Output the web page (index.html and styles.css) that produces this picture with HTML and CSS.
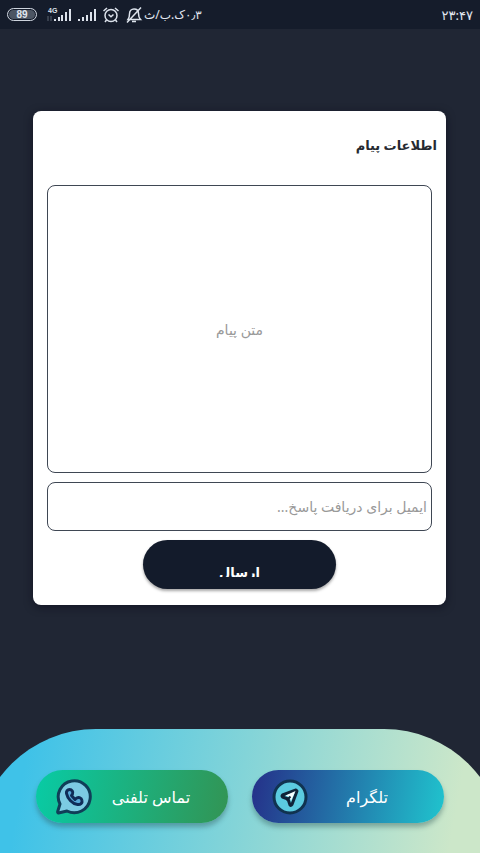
FILE: index.html
```html
<!DOCTYPE html>
<html lang="fa" dir="rtl">
<head>
  <meta charset="UTF-8" />
  <title>اطلاعات پیام</title>
  <meta name="viewport" content="width=device-width, initial-scale=1.0" />
  <link rel="stylesheet" href="styles.css">
</head>
<body>

<header class="status-bar">
  <time class="clock">۲۳:۴۷</time>
  <div class="status-icons">
    <span class="battery">89</span>
    <svg class="signal-4g" viewBox="0 0 26 18">
      <text x="2" y="7">4G</text>
      <path class="faint" d="M2 10v5M5 10v5"/>
      <path d="M9 15v-2M13 15v-4M16 15V9M20 15V6M24 15V3"/>
    </svg>
    <svg class="signal" viewBox="0 0 20 18">
      <path d="M2 15v-2M6 15v-4M10 15V9M14 15V6M18 15V3"/>
    </svg>
    <svg class="alarm" viewBox="0 0 18 18">
      <circle cx="9" cy="9.500" r="6"/>
      <path d="M6.500 8.500L9 10.800l2.500-2.300M1.500 5L5 2M16.500 5L13 2M4.500 14L3 16M13.500 14l1.500 2"/>
    </svg>
    <svg class="bell" viewBox="0 0 18 18">
      <path d="M3 13.500h12.500c-2-2-2-3-2-6 0-3-2-4.500-4.500-4.500S4.500 5 4.500 8c0 3 0 3.500-1.500 5.500zM7 15.500h4M16 1.500L2 16.500"/>
    </svg>
    <span class="speed" dir="rtl">۰٫۳ک.ب/ث</span>
  </div>
</header>

<main class="content">
  <form class="card">
    <h1 class="card-title">اطلاعات پیام</h1>
    <textarea class="field message" name="message" placeholder="متن پیام" aria-label="متن پیام"></textarea>
    <input class="field email" name="email" type="email" dir="rtl" placeholder="ایمیل برای دریافت پاسخ..." aria-label="ایمیل برای دریافت پاسخ" />
    <button class="send" type="submit"><span class="send-label">ارسال</span></button>
  </form>
</main>

<footer class="contact">
  <a class="pill telegram" href="#telegram">
    <span class="pill-label">تلگرام</span>
    <svg class="pill-icon" viewBox="0 0 38 38">
      <circle cx="19" cy="19" r="16" fill="#5bcbe0" stroke="#103350" stroke-width="3"/>
      <path d="M25 12L11.500 17q-1 1 0 2l5.500 2 2 6q1 1 2-.5l5-13.500z" fill="#5bcbe0" stroke="#102439" stroke-width="3" stroke-linejoin="round"/>
      <path d="M24.500 13L14.500 17.500l4 1.500 1.500 4z" fill="#f5ffff"/>
      <path d="M15.500 22.500l4-4" stroke="#102439" stroke-width="2"/>
    </svg>
  </a>
  <a class="pill phone" href="#phone">
    <span class="pill-label">تماس تلفنی</span>
    <svg class="pill-icon" viewBox="0 0 38 38">
      <path d="M5 26A16 16 0 1 1 12 33L3.500 35q-1 0-.8-1.500z" fill="#7ccbe3" stroke="#103e58" stroke-width="3" stroke-linejoin="round"/>
      <path d="M14.500 11.500c-2 0-3.500 2-3 4 1 5 6 10.500 11 11 3 .5 5-1.500 4.500-4-.5-3-4-4-6-2l-1 1-3.500-4 1-1.500c1-2-.5-4.500-3-4.500z" fill="#56a8d8" stroke="#102d58" stroke-width="3" stroke-linejoin="round"/>
    </svg>
  </a>
</footer>

</body>
</html>
```

FILE: styles.css
```css
* { box-sizing: border-box; }
body {
  font-family: "Noto Sans", "DejaVu Sans", sans-serif;
  background: #202634;
  display: flex;
  flex-direction: column;
  min-height: 100vh;
  margin: 0;
  overflow-x: hidden;
}
.status-bar {
  display: flex;
  justify-content: space-between;
  align-items: center;
  height: 29px;
  padding: 0 7px;
  background: #151c2b;
  color: #e2e7f0;
  font-size: 13px;
}
.status-icons {
  display: flex;
  align-items: center;
  direction: ltr;
}
.status-icons svg {
  height: 18px;
  fill: none;
  stroke: #dde3ec;
  stroke-width: 2;
}
.speed { font-size: 12px; }
.battery {
  width: 30px;
  height: 13px;
  margin-right: 9px;
  border: 1px solid #cdd3dd;
  border-radius: 7px;
  background: #4c5563;
  box-shadow: inset 0 0 0 1px #151c2b;
  font: bold 10px/11px "Liberation Sans", sans-serif;
  text-align: center;
}
.status-icons .signal-4g { width: 26px; margin-right: 5px; }
.signal-4g text {
  font: bold 7px "Liberation Sans", sans-serif;
  fill: #dde3ec;
  stroke: none;
  direction: ltr;
}
.signal-4g .faint { stroke: #5a6270; stroke-width: 1; }
.status-icons .signal { width: 20px; margin-right: 5px; }
.status-icons .alarm { width: 18px; margin-right: 5px; stroke-width: 1.5; }
.status-icons .bell { width: 18px; margin-right: 1px; stroke-width: 1.5; }
.content {
  flex: 1;
  padding: 82px 34px 24px 33px;
}
.card {
  display: flex;
  flex-direction: column;
  padding: 16px 14px;
  border-radius: 8px;
  background: #fff;
  box-shadow: 0 2px 8px rgba(10,10,25,0.6);
}
.card-title {
  margin: 0 -5px 22px;
  color: #262a31;
  font-size: 13px;
  line-height: 36px;
  font-weight: bold;
}
.field {
  width: 100%;
  margin: 0 0 9px;
  border: 1px solid #3f4754;
  border-radius: 8px;
  background: #fff;
  color: #262a31;
  font-family: inherit;
  font-size: 14px;
}
.field::placeholder { color: #999; opacity: 1; }
.message {
  display: block;
  height: 288px;
  padding: 132px 8px 8px;
  line-height: 24px;
  text-align: center;
  resize: none;
}
.email {
  height: 49px;
  padding: 0 4px;
}
.send {
  width: 50%;
  height: 49px;
  align-self: center;
  padding: 8px 0 0;
  border: none;
  border-radius: 25px;
  background: #131b2b;
  box-shadow: 0 2px 3px rgba(0,0,0,0.35);
  color: #fff;
  font-family: inherit;
  font-size: 13px;
  font-weight: bold;
  cursor: pointer;
}
.send-label {
  display: block;
  height: 17px;
  line-height: 24px;
  overflow: hidden;
}
.contact {
  display: flex;
  gap: 24px;
  margin: 0 -24px;
  padding: 41px 60px 30px;
  border-radius: 120px 120px 0 0;
  background: linear-gradient(100deg, #3fc2e8 10%, #83d4d8 50%, #cce7c9 90%);
}
.pill {
  flex: 1;
  display: flex;
  align-items: center;
  height: 53px;
  padding: 0 19px;
  border-radius: 27px;
  box-shadow: 0 4px 5px rgba(40,80,80,0.4);
  color: #fff;
  font-size: 16px;
  text-decoration: none;
}
.telegram { background: linear-gradient(100deg, #253089, #20c4ce); }
.phone { background: linear-gradient(100deg, #08cba5, #329454); }
.pill-label { flex: 1; text-align: center; }
.pill-icon { width: 38px; height: 38px; }
```
